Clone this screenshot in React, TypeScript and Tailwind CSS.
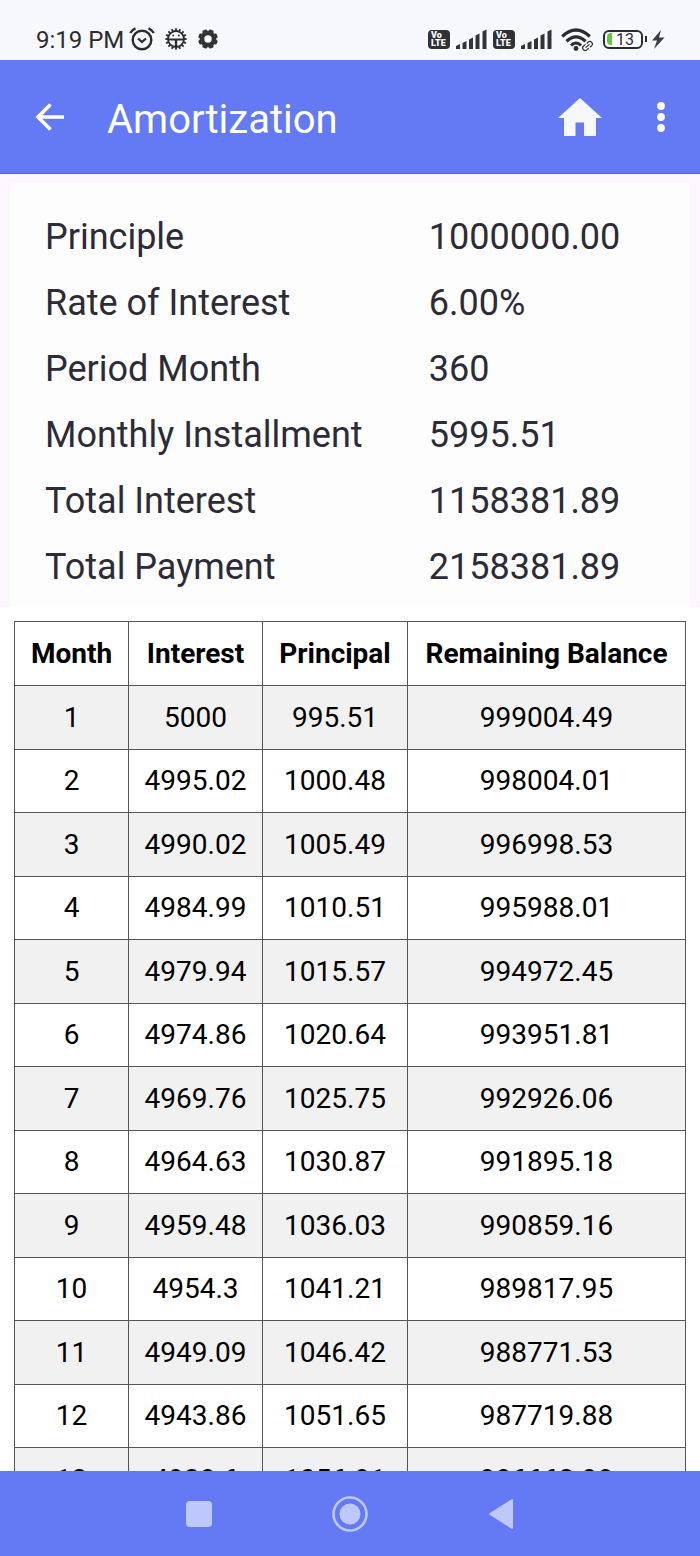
import { FC } from "react";

const summary = [
  { label: "Principle", value: "1000000.00" },
  { label: "Rate of Interest", value: "6.00%" },
  { label: "Period Month", value: "360" },
  { label: "Monthly Installment", value: "5995.51" },
  { label: "Total Interest", value: "1158381.89" },
  { label: "Total Payment", value: "2158381.89" },
];

const rows = [
  ["1", "5000", "995.51", "999004.49"],
  ["2", "4995.02", "1000.48", "998004.01"],
  ["3", "4990.02", "1005.49", "996998.53"],
  ["4", "4984.99", "1010.51", "995988.01"],
  ["5", "4979.94", "1015.57", "994972.45"],
  ["6", "4974.86", "1020.64", "993951.81"],
  ["7", "4969.76", "1025.75", "992926.06"],
  ["8", "4964.63", "1030.87", "991895.18"],
  ["9", "4959.48", "1036.03", "990859.16"],
  ["10", "4954.3", "1041.21", "989817.95"],
  ["11", "4949.09", "1046.42", "988771.53"],
  ["12", "4943.86", "1051.65", "987719.88"],
  ["13", "4938.6", "1056.91", "986662.98"],
];

const teeth = Array.from({ length: 16 }, (_, i) => i * 22.5);
const cogs = Array.from({ length: 8 }, (_, i) => i * 45 + 22.5);

const AlarmIcon: FC = () => (
  <svg className="w-[26px] h-6" viewBox="0 0 26 24" fill="none" stroke="#2b2c30">
    <circle cx="13" cy="13" r="9.3" strokeWidth="2.4" />
    <path d="M9 11.5l4 3.6 4-3.6" strokeWidth="2.2" />
    <path d="M1.2 6Q3 3 6.5 1.4M24.8 6Q23 3 19.5 1.4" strokeWidth="2.4" />
  </svg>
);

const BugIcon: FC = () => (
  <svg className="w-[22px] h-[22px]" viewBox="0 0 22 22" fill="none" stroke="#2b2c30">
    <circle cx="11" cy="11" r="8" strokeWidth="1.8" />
    {teeth.map((a) => (
      <path key={a} d="M11 0.3V3" strokeWidth="1.8" transform={`rotate(${a} 11 11)`} />
    ))}
    <path d="M3 11.5H19" strokeWidth="2" />
    <path d="M11 12V19" strokeWidth="2.4" />
    <circle cx="8.2" cy="7.5" r="0.9" fill="#2b2c30" stroke="none" />
    <circle cx="13.8" cy="7.5" r="0.9" fill="#2b2c30" stroke="none" />
  </svg>
);

const GearIcon: FC = () => (
  <svg className="w-5 h-5" viewBox="0 0 20 20" fill="none" stroke="#333438">
    <circle cx="10" cy="10" r="6" strokeWidth="4.6" />
    {cogs.map((a) => (
      <path
        key={a}
        d="M7.2 3L8 0.2H12L12.8 3Z"
        fill="#333438"
        stroke="none"
        transform={`rotate(${a} 10 10)`}
      />
    ))}
  </svg>
);

const VolteBadge: FC = () => (
  <span className="w-[22px] h-[19px] rounded bg-[#303134] text-white text-[9px] leading-[8px] font-black flex flex-col justify-center pl-[3px]">
    <span>Vo</span>
    <span>LTE</span>
  </span>
);

const SignalIcon: FC = () => (
  <svg className="w-8 h-5" viewBox="0 0 32 20" fill="#333438">
    <path d="M0 17L4 15V20H0Z" />
    <path d="M6.5 14L10.5 12V20H6.5Z" />
    <path d="M13 10.500L17 8.500V20H13Z" />
    <path d="M19.5 6.5L23.5 4.5V20H19.5Z" />
    <path d="M26.5 2.5L30.5 0.5V20H26.5Z" />
  </svg>
);

const WifiIcon: FC = () => (
  <svg className="w-8 h-[23px]" viewBox="0 0 32 23" fill="none" stroke="#2b2c30">
    <path d="M1.2 8.5Q15 -4.5 28.8 8.5" strokeWidth="3.2" />
    <path d="M5.5 13.2Q15 4.5 24.5 13.2" strokeWidth="3.2" />
    <path d="M10 17.5Q15 12.5 20 17.5" strokeWidth="3" />
    <circle cx="15" cy="20.500" r="2.400" fill="#2b2c30" stroke="none" />
    <g strokeWidth="1.2" transform="rotate(-40 26.5 18)">
      <path d="M26 15.5H23.5a2.5 2.5 0 0 0 0 5H26M27.5 15.5H29.5a2.5 2.5 0 0 1 0 5H27.5M24 18H29" />
    </g>
  </svg>
);

const StatusBar: FC = () => (
  <div className="shrink-0 h-[60px] pt-[18px] pl-9 pr-[35px] flex items-center justify-between bg-[#f7f8fb] text-[#2b2c30]">
    <div className="flex items-center">
      <span className="pt-0.5 text-2xl leading-6">9:19 PM</span>
      <span className="pl-[5px]">
        <AlarmIcon />
      </span>
      <span className="pl-2.5">
        <BugIcon />
      </span>
      <span className="pl-[11px]">
        <GearIcon />
      </span>
    </div>
    <div className="flex items-center">
      <VolteBadge />
      <span className="pl-1.5 pr-[5px]">
        <SignalIcon />
      </span>
      <VolteBadge />
      <span className="pl-1.5 pr-2">
        <SignalIcon />
      </span>
      <WifiIcon />
      <span className="ml-2.5 w-10 h-[19px] rounded-md border-2 border-[#2b2c30] bg-white flex items-center pl-0.5">
        <span className="w-[5px] h-3 rounded-l-sm bg-[#63c93c]" />
        <span className="pl-1 pt-px text-base leading-4">13</span>
      </span>
      <span className="ml-0.5 w-0.5 h-1.5 bg-[#2b2c30]" />
      <svg className="ml-1 w-3.5 h-[19px]" viewBox="0 0 14 19" fill="#3c3d42">
        <path d="M10 0L1 10.5H6L3 19L13.5 7.5H8Z" />
      </svg>
    </div>
  </div>
);

const AppBar: FC = () => (
  <header className="shrink-0 h-[114px] px-[35px] flex items-center bg-[#6479f4] border-b border-[#5967c4] text-white">
    <button type="button" aria-label="Back">
      <svg className="w-[30px] h-7" viewBox="0 0 30 28" fill="none" stroke="white" strokeWidth="3.6">
        <path d="M29 14H3.5M15.5 1.5L3 14L15.5 26.5" />
      </svg>
    </button>
    <h1 className="pl-[42px] pt-1.5 grow text-[40px] leading-[48px]">Amortization</h1>
    <button type="button" aria-label="Home">
      <svg className="w-11 h-[38px]" viewBox="0 0 44 38" fill="#f7f8fb">
        <path d="M22 0L44 20H38V38H26V24.5H17.5V38H6V20H0Z" />
      </svg>
    </button>
    <button type="button" aria-label="More options" className="ml-[55px]">
      <svg className="w-2 h-[30px]" viewBox="0 0 8 30" fill="white">
        <circle cx="4" cy="4" r="3.9" />
        <circle cx="4" cy="15" r="3.9" />
        <circle cx="4" cy="26" r="3.9" />
      </svg>
    </button>
  </header>
);

const Summary: FC = () => (
  <section className="bg-[#fdf6ff] px-2.5 pt-[9px]">
    <dl className="bg-[#fdfdfd] pt-[21px] pb-[7px] pl-[35px] pr-[31px] text-[#2c2b36] text-4xl">
      {summary.map((item) => (
        <div key={item.label} className="h-[66px] grid grid-cols-[5fr_3fr] items-center">
          <dt>{item.label}</dt>
          <dd>{item.value}</dd>
        </div>
      ))}
    </dl>
  </section>
);

const Schedule: FC = () => (
  <section className="bg-white px-3.5 pt-3.5">
    <table className="w-full border-collapse text-center text-[28px] leading-8 text-black">
      <thead>
        <tr className="h-16">
          <th className="w-[114px] border border-[#555555] font-bold">Month</th>
          <th className="w-[134px] border border-[#555555] font-bold">Interest</th>
          <th className="w-[145px] border border-[#555555] font-bold">Principal</th>
          <th className="border border-[#555555] font-bold">Remaining Balance</th>
        </tr>
      </thead>
      <tbody>
        {rows.map((row) => (
          <tr key={row[0]} className="h-[63px] odd:h-16 odd:bg-[#f1f1f1]">
            {row.map((cell, i) => (
              <td key={i} className="border border-[#555555]">
                {cell}
              </td>
            ))}
          </tr>
        ))}
      </tbody>
    </table>
  </section>
);

const NavBar: FC = () => (
  <nav className="shrink-0 h-[85px] flex items-center justify-center gap-[115px] bg-[#6479f4]">
    <button type="button" aria-label="Recent apps" className="w-9 flex justify-center">
      <span className="w-[26px] h-[26px] rounded bg-[#bfc8fb]" />
    </button>
    <button type="button" aria-label="Home screen" className="w-9 flex justify-center">
      <svg className="w-9 h-9" viewBox="0 0 36 36">
        <circle cx="18" cy="18" r="16.5" fill="none" stroke="#bfc8fb" strokeWidth="2.6" />
        <circle cx="18" cy="18" r="10.5" fill="#bfc8fb" />
      </svg>
    </button>
    <button type="button" aria-label="Go back" className="w-9 flex justify-center">
      <svg className="w-6 h-[30px]" viewBox="0 0 24 30" fill="#bfc8fb">
        <path d="M0.6 14.2L22.5 0.3Q24 -0.2 24 1.2V28.8Q24 30.2 22.5 29.7L0.6 15.8Q-0.3 15 0.6 14.2Z" />
      </svg>
    </button>
  </nav>
);

const App: FC = () => {
  return (
    <div className="h-screen flex flex-col bg-white font-[Roboto,sans-serif]">
      <StatusBar />
      <AppBar />
      <main className="flex-1 min-h-0 overflow-y-auto [scrollbar-width:none]">
        <Summary />
        <Schedule />
      </main>
      <NavBar />
    </div>
  );
};

export default App;
